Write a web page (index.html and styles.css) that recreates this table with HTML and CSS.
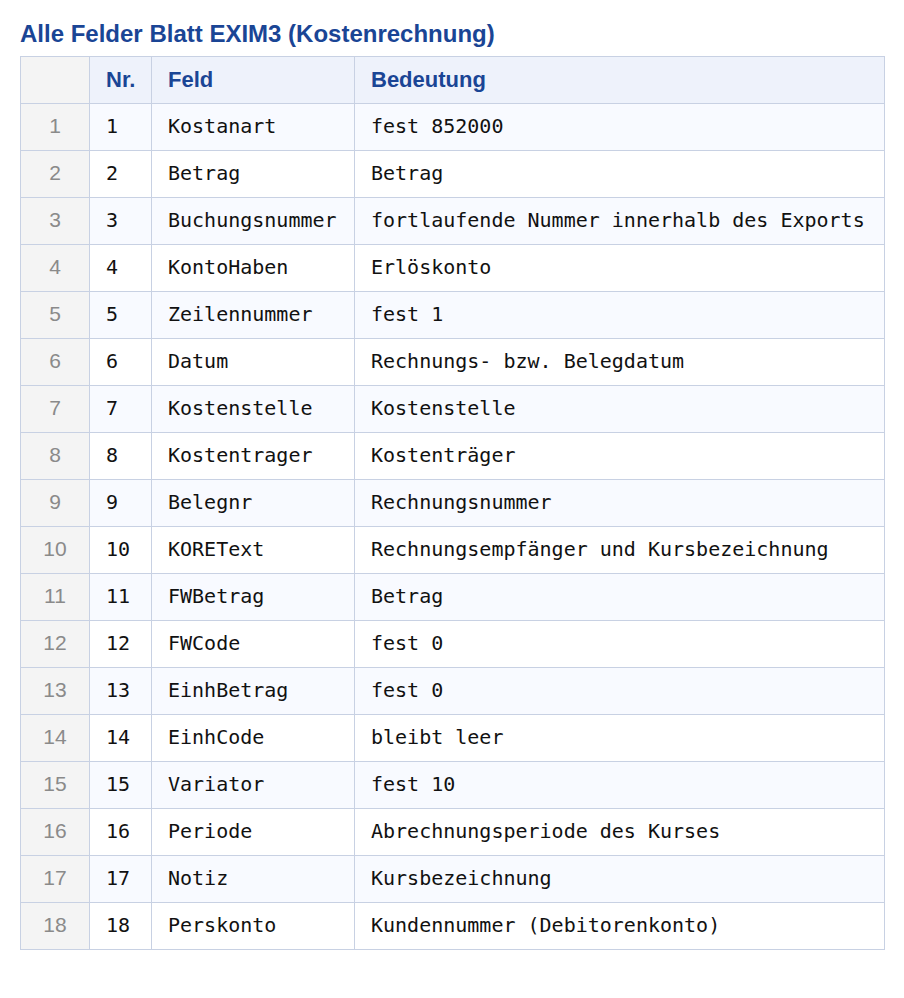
FILE: index.html
```html
<!DOCTYPE html>
<html lang="de">
<head>
<meta charset="utf-8">
<title>EXIM3</title>
<link rel="stylesheet" href="styles.css">
</head>
<body>
<h2 class="title">Alle Felder Blatt EXIM3 (Kostenrechnung)</h2>
<table class="grid">
  <colgroup>
    <col class="c-idx"><col class="c-nr"><col class="c-feld"><col class="c-bed">
  </colgroup>
  <thead>
    <tr><th class="idx"></th><th>Nr.</th><th>Feld</th><th>Bedeutung</th></tr>
  </thead>
  <tbody>
    <tr><td class="idx">1</td><td>1</td><td>Kostanart</td><td>fest 852000</td></tr>
    <tr><td class="idx">2</td><td>2</td><td>Betrag</td><td>Betrag</td></tr>
    <tr><td class="idx">3</td><td>3</td><td>Buchungsnummer</td><td>fortlaufende Nummer innerhalb des Exports</td></tr>
    <tr><td class="idx">4</td><td>4</td><td>KontoHaben</td><td>Erlöskonto</td></tr>
    <tr><td class="idx">5</td><td>5</td><td>Zeilennummer</td><td>fest 1</td></tr>
    <tr><td class="idx">6</td><td>6</td><td>Datum</td><td>Rechnungs- bzw. Belegdatum</td></tr>
    <tr><td class="idx">7</td><td>7</td><td>Kostenstelle</td><td>Kostenstelle</td></tr>
    <tr><td class="idx">8</td><td>8</td><td>Kostentrager</td><td>Kostenträger</td></tr>
    <tr><td class="idx">9</td><td>9</td><td>Belegnr</td><td>Rechnungsnummer</td></tr>
    <tr><td class="idx">10</td><td>10</td><td>KOREText</td><td>Rechnungsempfänger und Kursbezeichnung</td></tr>
    <tr><td class="idx">11</td><td>11</td><td>FWBetrag</td><td>Betrag</td></tr>
    <tr><td class="idx">12</td><td>12</td><td>FWCode</td><td>fest 0</td></tr>
    <tr><td class="idx">13</td><td>13</td><td>EinhBetrag</td><td>fest 0</td></tr>
    <tr><td class="idx">14</td><td>14</td><td>EinhCode</td><td>bleibt leer</td></tr>
    <tr><td class="idx">15</td><td>15</td><td>Variator</td><td>fest 10</td></tr>
    <tr><td class="idx">16</td><td>16</td><td>Periode</td><td>Abrechnungsperiode des Kurses</td></tr>
    <tr><td class="idx">17</td><td>17</td><td>Notiz</td><td>Kursbezeichnung</td></tr>
    <tr><td class="idx">18</td><td>18</td><td>Perskonto</td><td>Kundennummer (Debitorenkonto)</td></tr>
  </tbody>
</table>
</body>
</html>
```

FILE: styles.css
```css
body {
  margin: 0;
  padding: 20px 20px;
  background: #ffffff;
  font-family: "Liberation Sans", Arial, sans-serif;
}

.title {
  margin: 0 0 9px 0;
  font-size: 24px;
  line-height: 27px;
  font-weight: bold;
  color: #1a4595;
}

.grid {
  border-collapse: collapse;
  width: 864px;
  table-layout: fixed;
}

.c-idx { width: 69px; }
.c-nr { width: 62px; }
.c-feld { width: 203px; }
.c-bed { width: 530px; }

.grid th,
.grid td {
  border: 1px solid #c8d1e3;
  height: 47px;
  padding: 0 0 0 16px;
  box-sizing: border-box;
  text-align: left;
  vertical-align: middle;
  white-space: nowrap;
}

.grid th {
  background: #eef2fb;
  color: #1a4595;
  font-family: "Liberation Sans", Arial, sans-serif;
  font-size: 22px;
  font-weight: bold;
}

.grid td {
  font-family: "DejaVu Sans Mono", "Liberation Mono", monospace;
  font-size: 20px;
  color: #111111;
  padding-bottom: 3px;
}

.grid tbody tr:nth-child(odd) td {
  background: #f8faff;
}

.grid tbody tr:nth-child(even) td {
  background: #ffffff;
}

.grid th.idx,
.grid td.idx,
.grid tbody tr td.idx {
  background: #f4f4f4;
  color: #8a8a8a;
  font-family: "Liberation Sans", Arial, sans-serif;
  font-size: 21px;
  text-align: center;
  padding: 0 0 2px 0;
}
```
